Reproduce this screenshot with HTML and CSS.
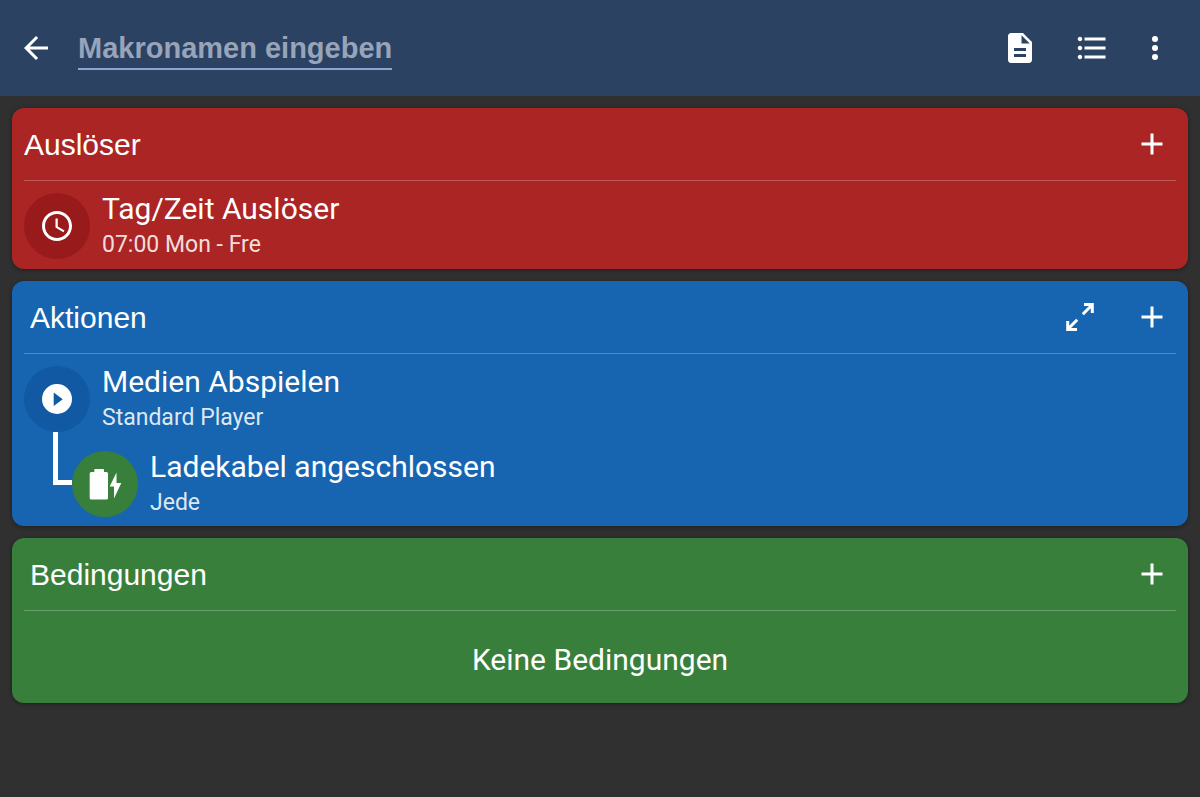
FILE: index.html
```html
<!DOCTYPE html>
<html lang="de">
<head>
  <meta charset="utf-8">
  <meta name="viewport" content="width=device-width, initial-scale=1">
  <title>Makro bearbeiten</title>
  <link rel="stylesheet" href="styles.css">
</head>
<body>

<header class="toolbar">
  <button type="button" class="icon-btn" aria-label="Zurück">
    <svg class="icon" viewBox="0 0 24 24"><path d="M20 11H7.83l5.59-5.59L12 4l-8 8 8 8 1.41-1.41L7.83 13H20v-2z"/></svg>
  </button>
  <input type="text" class="macro-name" placeholder="Makronamen eingeben" aria-label="Makroname">
  <div class="toolbar-actions">
    <button type="button" class="icon-btn" aria-label="Beschreibung">
      <svg class="icon" viewBox="0 0 24 24"><path d="M14 2H6c-1.1 0-1.99.9-1.99 2L4 20c0 1.1.89 2 1.99 2H18c1.1 0 2-.9 2-2V8l-6-6zm2 16H8v-2h8v2zm0-4H8v-2h8v2zm-3-5V3.500L18.500 9H13z"/></svg>
    </button>
    <button type="button" class="icon-btn" aria-label="Variablen">
      <svg class="icon" viewBox="0 0 24 24"><path d="M4 10.500c-.83 0-1.500.67-1.500 1.500s.67 1.500 1.500 1.500 1.500-.67 1.500-1.500-.67-1.500-1.500-1.500zm0-6c-.83 0-1.500.67-1.500 1.500S3.170 7.500 4 7.500 5.500 6.830 5.500 6 4.830 4.500 4 4.500zm0 12c-.83 0-1.500.68-1.500 1.500s.68 1.500 1.500 1.500 1.500-.68 1.500-1.500-.67-1.500-1.500-1.500zM7 19h14v-2H7v2zm0-6h14v-2H7v2zm0-8v2h14V5H7z"/></svg>
    </button>
    <button type="button" class="icon-btn menu-btn" aria-label="Menü">
      <svg class="icon" viewBox="0 0 24 24"><circle cx="12" cy="6" r="2"/><circle cx="12" cy="12" r="2"/><circle cx="12" cy="18" r="2"/></svg>
    </button>
  </div>
</header>

<main class="sections">
  <section class="card triggers">
    <div class="card-head">
      <h2>Auslöser</h2>
      <button type="button" class="icon-btn" aria-label="Auslöser hinzufügen">
        <svg class="icon" viewBox="0 0 24 24"><path d="M19 13h-6v6h-2v-6H5v-2h6V5h2v6h6v2z"/></svg>
      </button>
    </div>
    <ul class="items">
      <li class="item">
        <span class="badge">
          <svg class="icon" viewBox="0 0 24 24"><path d="M11.990 2C6.470 2 2 6.480 2 12s4.470 10 9.990 10C17.520 22 22 17.520 22 12S17.520 2 11.990 2zM12 20c-4.420 0-8-3.580-8-8s3.580-8 8-8 8 3.580 8 8-3.580 8-8 8zm.5-13H11v6l5.250 3.150.75-1.230-4.500-2.670z"/></svg>
        </span>
        <div>
          <h3>Tag/Zeit Auslöser</h3>
          <p>07:00 Mon - Fre</p>
        </div>
      </li>
    </ul>
  </section>

  <section class="card actions">
    <div class="card-head">
      <h2>Aktionen</h2>
      <button type="button" class="icon-btn" aria-label="Vergrößern">
        <svg class="icon icon-line" viewBox="0 0 36 36"><path d="M22 5.500h8.300V14M30 6L20.800 15.200M5.700 22v8.500H15M6 30l9.200-9.200"/></svg>
      </button>
      <button type="button" class="icon-btn" aria-label="Aktion hinzufügen">
        <svg class="icon" viewBox="0 0 24 24"><path d="M19 13h-6v6h-2v-6H5v-2h6V5h2v6h6v2z"/></svg>
      </button>
    </div>
    <ul class="items">
      <li class="item">
        <span class="badge">
          <svg class="icon" viewBox="0 0 36 36"><path fill-rule="evenodd" d="M18 3a15 15 0 1 0 0 30a15 15 0 1 0 0-30zM14.700 11.500v13.500l9-6.750z"/></svg>
        </span>
        <div>
          <h3>Medien Abspielen</h3>
          <p>Standard Player</p>
        </div>
      </li>
      <li class="item child">
        <span class="badge condition">
          <svg class="icon" viewBox="0 0 36 36"><path d="M8.500 3h7.500a1 1 0 0 1 1 1v2h2.500a1.500 1.500 0 0 1 1.500 1.500v24.500a1.500 1.500 0 0 1-1.500 1.500h-15.300a1.500 1.500 0 0 1-1.500-1.500V7.500A1.500 1.500 0 0 1 4.200 6h3.100V4a1 1 0 0 1 1.200-1zM29.500 6.500L22.700 20.500h4.300v12L34.300 17h-4.800z"/></svg>
        </span>
        <div>
          <h3>Ladekabel angeschlossen</h3>
          <p>Jede</p>
        </div>
      </li>
    </ul>
  </section>

  <section class="card conditions">
    <div class="card-head">
      <h2>Bedingungen</h2>
      <button type="button" class="icon-btn" aria-label="Bedingung hinzufügen">
        <svg class="icon" viewBox="0 0 24 24"><path d="M19 13h-6v6h-2v-6H5v-2h6V5h2v6h6v2z"/></svg>
      </button>
    </div>
    <p class="empty">Keine Bedingungen</p>
  </section>
</main>

</body>
</html>
```

FILE: styles.css
```css
* {
  box-sizing: border-box;
}
body {
  margin: 0;
  background-color: #303030;
  color: white;
  font-family: Roboto, sans-serif;
}
h2, h3, p, ul {
  margin: 0;
  padding: 0;
  font-weight: 400;
}

/* toolbar */
.toolbar {
  display: flex;
  align-items: center;
  min-height: 96px;
  padding-right: 18px;
  background-color: #2c4262;
}
.toolbar-actions {
  display: flex;
  margin-left: auto;
}
.macro-name {
  width: 314px;
  min-width: 0;
  height: 44px;
  margin-left: 6px;
  padding: 2px 0 0;
  border: none;
  border-bottom: 2px solid #8ea3d0;
  background: none;
  color: white;
  font-family: "Liberation Sans", Arial, sans-serif;
  font-size: 29px;
  font-weight: 700;
}
.macro-name::placeholder {
  color: #97a4ba;
  opacity: 1;
}
.macro-name:focus {
  outline: none;
  border-color: white;
}
.icon-btn {
  display: flex;
  flex: none;
  align-items: center;
  justify-content: center;
  width: 72px;
  height: 72px;
  padding: 0;
  border: none;
  background: none;
  color: inherit;
  cursor: pointer;
}
.menu-btn {
  width: 54px;
}
.icon {
  width: 36px;
  height: 36px;
  fill: currentColor;
}
.icon-line {
  fill: none;
  stroke: currentColor;
  stroke-width: 3;
}

/* cards */
.sections {
  display: flex;
  flex-direction: column;
  gap: 12px;
  padding: 12px;
}
.card {
  border-radius: 12px;
  box-shadow: 0 1px 4px rgba(0,0,0,0.4);
}
.triggers {
  background-color: #ab2525;
}
.actions {
  background-color: #1765b0;
}
.conditions {
  background-color: #397f3c;
}
.card-head {
  display: flex;
  align-items: center;
  padding-left: 18px;
}
.triggers .card-head {
  padding-left: 12px;
}
.card-head h2 {
  flex: 1;
  padding-top: 2px;
  font-family: "Liberation Sans", Arial, sans-serif;
  font-size: 30px;
  line-height: 36px;
}
.items, .empty {
  margin: 0 12px;
  border-top: 1px solid rgba(255,255,255,0.25);
}
.items {
  display: flex;
  flex-direction: column;
  gap: 19px;
  padding: 12px 0 9px;
  list-style: none;
}
.triggers .items {
  padding-bottom: 10px;
}
.item {
  display: flex;
  gap: 12px;
}
.item h3 {
  font-size: 30px;
  line-height: 32px;
}
.item p {
  margin-top: 6px;
  color: rgba(255,255,255,0.87);
  font-size: 23px;
  line-height: 28px;
}
.badge {
  display: flex;
  flex: none;
  align-items: center;
  justify-content: center;
  width: 66px;
  height: 66px;
  border-radius: 50%;
}
.triggers .badge {
  background-color: #981a1a;
}
.actions .badge {
  background-color: #1259a3;
}
.actions .condition {
  background-color: #397f3c;
}

/* nested item with the line down from its parent */
.child {
  position: relative;
  padding-left: 48px;
}
.child::before {
  content: "";
  position: absolute;
  top: -19px;
  left: 29px;
  box-sizing: border-box;
  width: 19px;
  height: 53px;
  border-left: 5px solid white;
  border-bottom: 5px solid white;
}
.empty {
  padding: 31px 0 25px;
  text-align: center;
  font-size: 30px;
  line-height: 36px;
}
```
